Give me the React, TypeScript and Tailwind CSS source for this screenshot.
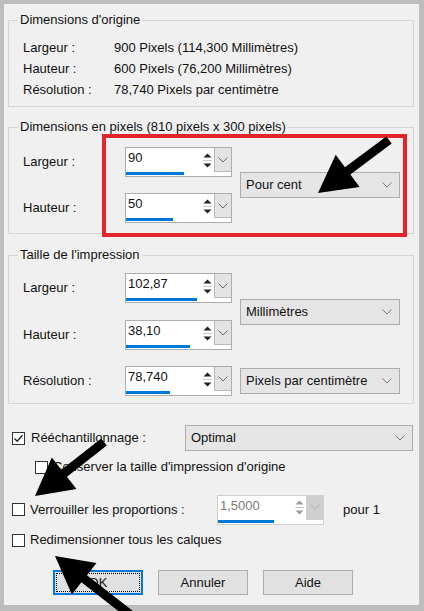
type Pt = [number, number]

// polygon for a thick arrow, tip first, computed from tip/tail
function arrowPoints(tip: Pt, tail: Pt, headLen = 37, headW = 40, shaftW = 9) {
  const dx = tail[0] - tip[0]
  const dy = tail[1] - tip[1]
  const len = Math.hypot(dx, dy)
  const ux = dx / len
  const uy = dy / len
  const px = -uy
  const py = ux
  const bx = tip[0] + ux * headLen
  const by = tip[1] + uy * headLen
  const pts: Pt[] = [
    tip,
    [bx + px * (headW / 2), by + py * (headW / 2)],
    [bx + px * (shaftW / 2), by + py * (shaftW / 2)],
    [tail[0] + px * (shaftW / 2), tail[1] + py * (shaftW / 2)],
    [tail[0] - px * (shaftW / 2), tail[1] - py * (shaftW / 2)],
    [bx - px * (shaftW / 2), by - py * (shaftW / 2)],
    [bx - px * (headW / 2), by - py * (headW / 2)],
  ]
  return pts.map((p) => p.join(',')).join(' ')
}

function Chevron({ color = '#5f5f5f' }: { color?: string }) {
  return (
    <svg width="10" height="6" viewBox="0 0 10 6">
      <path d="M0.5 0.5 L5 5 L9.5 0.5" fill="none" stroke={color} strokeWidth="1" />
    </svg>
  )
}

function Spin({ value, bar, disabled }: { value: string; bar: number; disabled?: boolean }) {
  const arrow = disabled ? '#9c9c9c' : '#222'
  return (
    <div
      className={`w-[107px] h-[30px] border bg-white flex flex-col ${
        disabled ? 'border-[#cfcfcf] text-[#7a7a7a]' : 'border-[#adadad]'
      }`}
    >
      <div className="flex h-[24px]">
        <div className="flex-1 pl-[2px] leading-[20px]">{value}</div>
        <div className="w-[13px] flex flex-col items-center justify-center gap-[2px]">
          <svg width="9" height="5" viewBox="0 0 9 5">
            <path d="M0.5 4.5 L4.5 0.5 L8.5 4.5 Z" fill={arrow} />
          </svg>
          <div className="w-[9px] h-px bg-[#c8c8c8]" />
          <svg width="9" height="5" viewBox="0 0 9 5">
            <path d="M0.5 0.5 L4.5 4.5 L8.5 0.5 Z" fill={arrow} />
          </svg>
        </div>
        <div
          className={`w-[17px] border-l border-b flex items-center justify-center ${
            disabled ? 'bg-[#cfcfcf] border-[#cfcfcf]' : 'bg-[#e3e3e3] border-[#b9b9b9]'
          }`}
        >
          <Chevron color={disabled ? '#b0b0b0' : '#6a6a6a'} />
        </div>
      </div>
      <div className="h-[4px]">
        <div className="h-[3px] bg-[#0078d7]" style={{ width: bar }} />
      </div>
    </div>
  )
}

function Select({ label, w = 160 }: { label: string; w?: number }) {
  return (
    <div
      className="h-[26px] border border-[#adadad] bg-[#e5e5e5] flex items-center justify-between pl-[5px] pr-[7px] shrink-0"
      style={{ width: w }}
    >
      <span>{label}</span>
      <Chevron color="#7a7a7a" />
    </div>
  )
}

function Check({ checked }: { checked?: boolean }) {
  return (
    <div className="w-[13px] h-[13px] border border-[#333] bg-white flex items-center justify-center shrink-0">
      {checked && (
        <svg width="11" height="11" viewBox="0 0 11 11">
          <path d="M1.5 5.5 L4.2 8.3 L9.5 2.2" fill="none" stroke="#222" strokeWidth="1.3" />
        </svg>
      )}
    </div>
  )
}

function Group({ title, mt, children }: { title: string; mt: string; children: React.ReactNode }) {
  return (
    <fieldset className={`${mt} ml-[4px] mr-[5px] border border-[#d5d5d5] px-0`}>
      <legend className="ml-[9px] px-[2px] leading-[16px]">{title}</legend>
      {children}
    </fieldset>
  )
}

function Row({ label, children }: { label: string; children: React.ReactNode }) {
  return (
    <div className="flex items-center">
      <span className="w-[102px]">{label}</span>
      {children}
    </div>
  )
}

function Button({ label, focused }: { label: string; focused?: boolean }) {
  if (focused) {
    return (
      <div className="w-[90px] h-[25px] border-2 border-[#0078d7] bg-[#e1e1e1] p-[1px]">
        <div className="h-full border border-dotted border-black flex items-center justify-center">{label}</div>
      </div>
    )
  }
  return (
    <div className="w-[90px] h-[25px] border border-[#adadad] bg-[#e1e1e1] flex items-center justify-center">
      {label}
    </div>
  )
}

export default function App() {
  return (
    <div className="relative w-[424px] h-[611px] bg-[#bdbdbd] pl-[4px] pt-[4px] pr-[5px] pb-[6px] font-['Liberation_Sans',Arial,sans-serif] text-[13px] text-[#111]">
      <div className="h-full bg-[#f0f0f0] flex flex-col">
        {/* Dimensions d'origine */}
        <Group title="Dimensions d'origine" mt="mt-[8px]">
          <div className="grid grid-cols-[91px_1fr] leading-[21px] pt-[9px] pb-[6px] pl-[14px]">
            <span>Largeur :</span>
            <span>900 Pixels (114,300 Millimètres)</span>
            <span>Hauteur :</span>
            <span>600 Pixels (76,200 Millimètres)</span>
            <span>Résolution :</span>
            <span>78,740 Pixels par centimètre</span>
          </div>
        </Group>

        {/* Dimensions en pixels */}
        <Group title="Dimensions en pixels (810 pixels x 300 pixels)" mt="mt-[12px]">
          <div className="pt-[12px] pb-[10px] pl-[14px] flex items-center">
            <div className="flex flex-col gap-[16px]">
              <Row label="Largeur :">
                <Spin value="90" bar={58} />
              </Row>
              <Row label="Hauteur :">
                <Spin value="50" bar={47} />
              </Row>
            </div>
            <div className="ml-[8px]">
              <Select label="Pour cent" />
            </div>
          </div>
        </Group>

        {/* Taille de l'impression */}
        <Group title="Taille de l'impression" mt="mt-[13px]">
          <div className="pt-[10px] pb-[7px] pl-[14px]">
            <div className="flex items-center">
              <div className="flex flex-col gap-[17px]">
                <Row label="Largeur :">
                  <Spin value="102,87" bar={71} />
                </Row>
                <Row label="Hauteur :">
                  <Spin value="38,10" bar={64} />
                </Row>
              </div>
              <div className="ml-[8px]">
                <Select label="Millimètres" />
              </div>
            </div>
            <div className="flex items-center mt-[16px]">
              <Row label="Résolution :">
                <Spin value="78,740" bar={44} />
              </Row>
              <div className="ml-[8px]">
                <Select label="Pixels par centimètre" />
              </div>
            </div>
          </div>
        </Group>

        {/* Options */}
        <div className="mt-[21px] h-[26px] flex items-center pl-[8px]">
          <div className="w-[173px] flex items-center gap-[6px]">
            <Check checked />
            <span>Rééchantillonnage :</span>
          </div>
          <Select label="Optimal" w={228} />
        </div>
        <div className="mt-[8px] h-[16px] flex items-center gap-[5px] pl-[31px]">
          <Check />
          <span>Conserver la taille d'impression d'origine</span>
        </div>
        <div className="mt-[20px] h-[29px] flex items-center pl-[8px]">
          <div className="w-[205px] flex items-center gap-[5px]">
            <Check />
            <span>Verrouiller les proportions :</span>
          </div>
          <Spin value="1,5000" bar={56} disabled />
          <span className="ml-[19px]">pour 1</span>
        </div>
        <div className="mt-[8px] h-[16px] flex items-center gap-[5px] pl-[8px]">
          <Check />
          <span>Redimensionner tous les calques</span>
        </div>
        <div className="mt-[22px] flex gap-[15px] pl-[49px]">
          <Button label="OK" focused />
          <Button label="Annuler" />
          <Button label="Aide" />
        </div>
      </div>

      {/* annotations drawn over the dialog */}
      <svg className="absolute inset-0 pointer-events-none" width="424" height="611" viewBox="0 0 424 611">
        <rect x="104" y="136" width="301" height="99" fill="none" stroke="#e3242b" strokeWidth="4" />
        <polygon points={arrowPoints([318, 193], [389, 140])} fill="#000" />
        <polygon points={arrowPoints([35, 496], [104, 442])} fill="#000" />
        <polygon points={arrowPoints([55, 556], [132, 616])} fill="#000" />
      </svg>
    </div>
  )
}
